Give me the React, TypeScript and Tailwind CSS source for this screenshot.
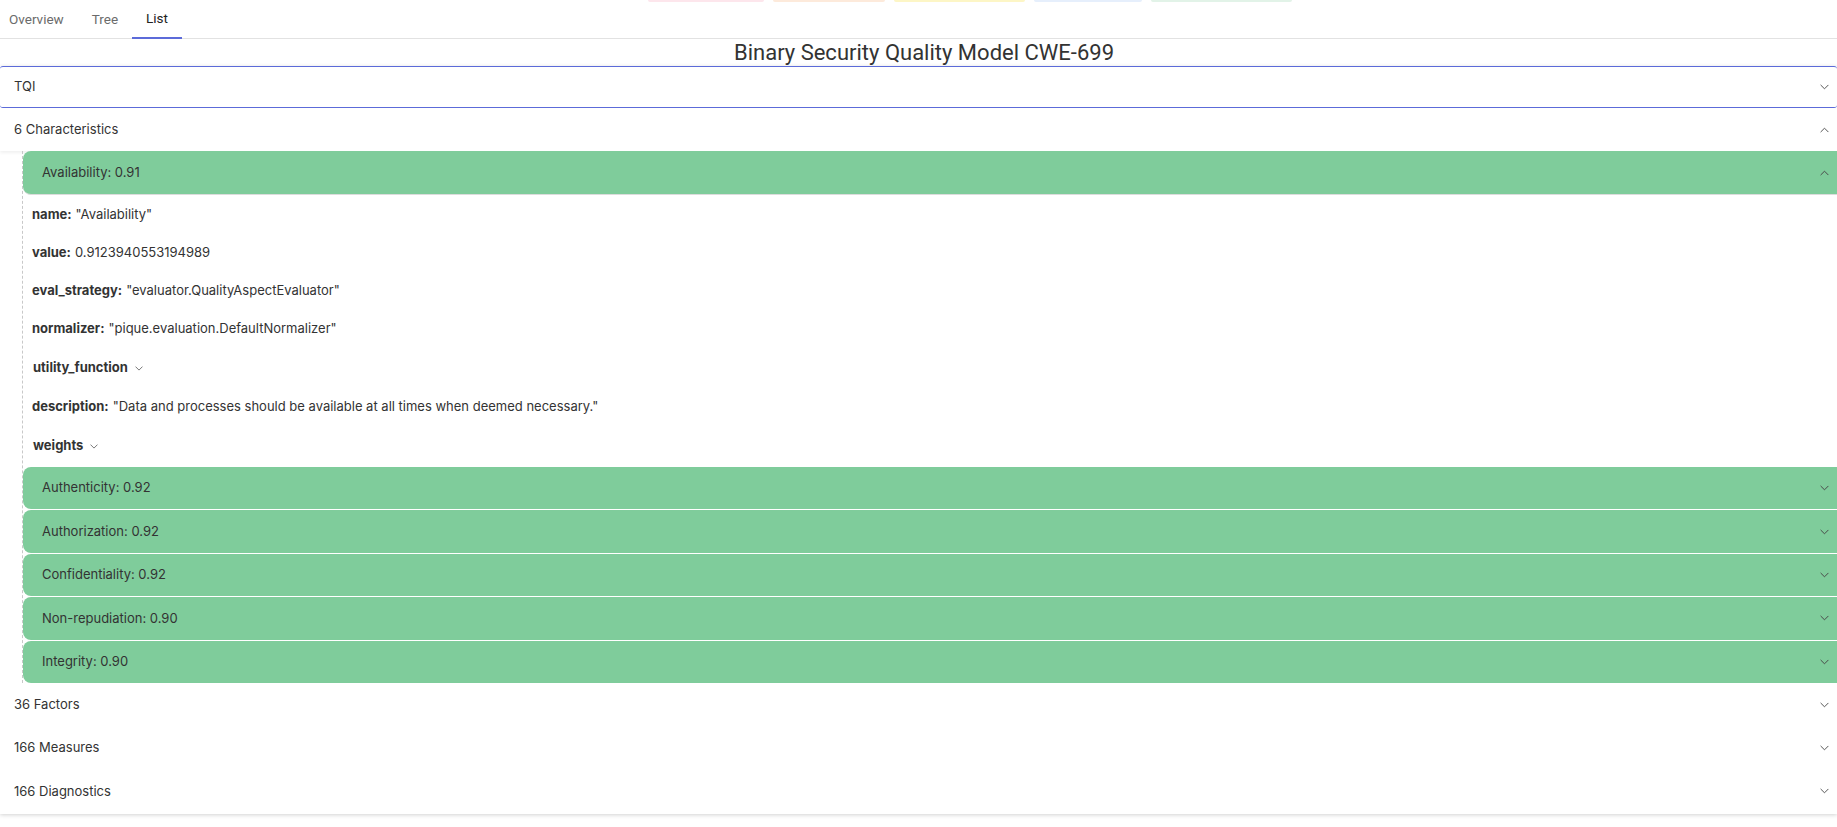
import React from "react";

const CHILDREN = [
  "Authenticity: 0.92",
  "Authorization: 0.92",
  "Confidentiality: 0.92",
  "Non-repudiation: 0.90",
  "Integrity: 0.90",
];

const PILLS = [
  "w-[116px] bg-[#fde6ec]",
  "w-[112px] bg-[#fdeadb]",
  "w-[131px] bg-[#fdf6c6]",
  "w-[108px] bg-[#e6effc]",
  "w-[141px] bg-[#e2f3e8]",
];

function Chevron({ up = false, small = false }: { up?: boolean; small?: boolean }) {
  return (
    <svg
      className={small ? "w-[8px] h-[5px]" : "w-[9px] h-[6px]"}
      viewBox="0 0 10 6"
      fill="none"
      stroke="currentColor"
      strokeWidth={1.1}
    >
      <path d={up ? "M1 5l4-4 4 4" : "M1 1l4 4 4-4"} strokeLinecap="round" strokeLinejoin="round" />
    </svg>
  );
}

function Row({ label, up = false, className = "" }: { label: string; up?: boolean; className?: string }) {
  return (
    <div className={`flex items-center justify-between pl-[14px] pr-[8px] ${className}`}>
      <span>{label}</span>
      <span className="text-[#555]">
        <Chevron up={up} />
      </span>
    </div>
  );
}

function GreenCard({ label, up = false, className = "" }: { label: string; up?: boolean; className?: string }) {
  return (
    <div
      className={`flex items-center justify-between bg-[#7fcc9b] rounded-l-lg pl-[19px] pr-[8px] ${className}`}
    >
      <span>{label}</span>
      <span className="text-[#4a4a4a]">
        <Chevron up={up} />
      </span>
    </div>
  );
}

function Prop({ name, value }: { name: string; value: string }) {
  return (
    <div className="h-[38px] flex items-center pl-[9px]">
      <span className="font-bold mr-[4px]">{name}:</span>
      <span>{value}</span>
    </div>
  );
}

function Toggle({ name }: { name: string }) {
  return (
    <div className="h-[40px] flex items-center gap-[7px] pl-[10px]">
      <span className="font-bold">{name}</span>
      <span className="text-[#666]">
        <Chevron small />
      </span>
    </div>
  );
}

export default function App() {
  return (
    <div className="min-h-screen bg-white text-[13px] text-[#333] font-['Inter',sans-serif] overflow-hidden">
      {/* Tabs */}
      <div className="relative h-[39px] border-b border-[#e2e2e2] flex font-['Roboto',sans-serif] text-[13.5px]">
        <div className="absolute top-0 left-[648px] flex gap-[9px]">
          {PILLS.map((p, i) => (
            <div key={i} className={`h-[2px] rounded-b ${p}`} />
          ))}
        </div>
        <div className="pl-[9px] pr-[14px] flex items-center text-[#6b6b6b]">Overview</div>
        <div className="px-[14px] flex items-center text-[#6b6b6b]">Tree</div>
        <div className="px-[14px] flex items-center text-[#222] border-b-2 border-[#5c6bd9] -mb-px">List</div>
      </div>

      {/* Title */}
      <h1 className="h-[27px] pl-[11px] flex items-center justify-center font-['Roboto',sans-serif] text-[22px] text-[#333]">
        Binary Security Quality Model CWE-699
      </h1>

      {/* Accordion list */}
      <div className="shadow-[0_1px_4px_rgba(0,0,0,0.18)] bg-white">
        <Row label="TQI" className="h-[42px] border-y border-[#5c6bd9] rounded-[3px]" />
        <Row label="6 Characteristics" up className="h-[43px] shadow-[0_2px_3px_rgba(0,0,0,0.06)]" />

        <div className="ml-[22px] border-l border-dashed border-[#c8c8c8]">
          <GreenCard label="Availability: 0.91" up className="h-[44px] pl-[19px] border-b border-[#dcdcdc]" />
          <div className="pt-[1px]">
            <Prop name="name" value={'"Availability"'} />
            <Prop name="value" value="0.9123940553194989" />
            <Prop name="eval_strategy" value={'"evaluator.QualityAspectEvaluator"'} />
            <Prop name="normalizer" value={'"pique.evaluation.DefaultNormalizer"'} />
            <Toggle name="utility_function" />
            <Prop
              name="description"
              value={'"Data and processes should be available at all times when deemed necessary."'}
            />
            <Toggle name="weights" />
          </div>
          <div className="mt-[1px] flex flex-col gap-px">
            {CHILDREN.map((c) => (
              <GreenCard key={c} label={c} className="h-[42.4px]" />
            ))}
          </div>
        </div>

        <Row label="36 Factors" className="h-[44px]" />
        <Row label="166 Measures" className="h-[42px]" />
        <Row label="166 Diagnostics" className="h-[45px]" />
      </div>
    </div>
  );
}
